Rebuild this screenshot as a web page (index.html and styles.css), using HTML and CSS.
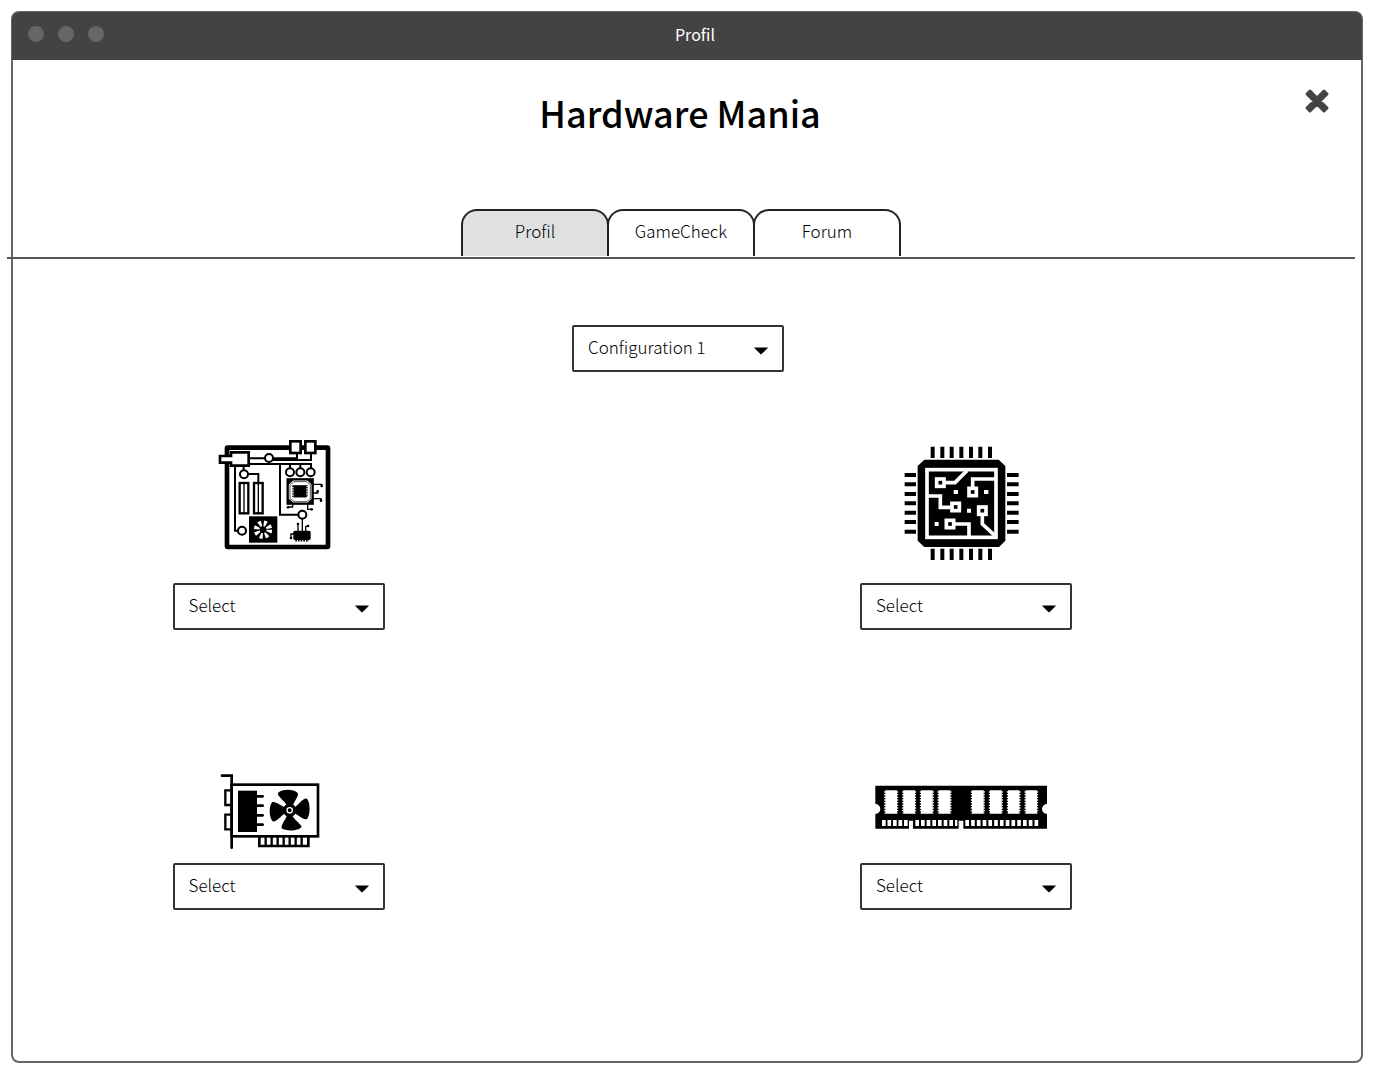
FILE: index.html
```html
<!DOCTYPE html>
<html lang="fr">
<head>
<meta charset="utf-8">
<title>Hardware Mania</title>
<meta name="viewport" content="width=device-width, initial-scale=1">
<link rel="stylesheet" href="styles.css">
</head>
<body>
<div class="window">
  <header class="titlebar">
    <span class="dots"><i class="dot"></i><i class="dot"></i><i class="dot"></i></span>
    <span class="titlebar-text">Profil</span>
  </header>

  <div class="masthead">
    <h1 class="brand">Hardware Mania</h1>
    <button class="close" type="button" aria-label="Fermer">
      <svg viewBox="0 0 26 26" width="26" height="26"><path d="M6 3 13 10 20 3 23 6 16 13 23 20 20 23 13 16 6 23 3 20 10 13 3 6Z" fill="#444" stroke="#444" stroke-width="3" stroke-linejoin="round"/></svg>
    </button>
  </div>

  <nav class="tabs">
    <a class="tab tab-active" href="#profil" aria-current="page">Profil</a>
    <a class="tab" href="#gamecheck">GameCheck</a>
    <a class="tab" href="#forum">Forum</a>
  </nav>

  <main class="content">
    <div class="select config">
      <select aria-label="Configuration"><option>Configuration 1</option></select>
      <svg class="caret" viewBox="0 0 14 8" width="14" height="8"><path d="M0 0.500H14Q13 2 7 7.500Q1 2 0 0.500Z"/></svg>
    </div>

    <div class="parts">
      <section class="part">
        <svg class="part-icon" viewBox="-126 0 636 384" role="img" aria-label="Carte mère">
          <rect x="36" y="38" width="303" height="298" rx="2" fill="#fff" stroke="#000" stroke-width="14"/>
          <g fill="none" stroke="#000" stroke-width="6">
            <path d="M100 70H246V56M150 75H288V56M100 87H288V100M225 87V100M256 87V100M195 87V239H250M86 94V110M86 117H130V145M60 92V287H70"/>
            <path d="M262 250V290M249 290V266M272 290V275L279 273M238 297H228V307" stroke-width="4"/>
            <path d="M292 148H320V153M292 174H308V168M292 191H318V197M233 205V216H220M278 205V223H290" stroke-width="4"/>
          </g>
          <g fill="#fff" stroke="#000" stroke-width="6">
            <path d="M15 63H48V52H101V92H48V83H15Z" stroke-width="8"/>
            <rect x="226" y="19" width="31" height="35" stroke-width="8"/>
            <rect x="271" y="19" width="30" height="35" stroke-width="8"/>
            <circle cx="162" cy="69" r="12"/><circle cx="87" cy="118" r="12"/>
            <circle cx="225" cy="112" r="12"/><circle cx="256" cy="112" r="12"/><circle cx="287" cy="112" r="12"/>
            <circle cx="262" cy="239" r="12"/><circle cx="81" cy="287" r="12"/>
            <rect x="74" y="144" width="26" height="91" stroke-width="7"/><rect x="117" y="144" width="26" height="91" stroke-width="7"/>
            <path d="M87 144V235M130 144V235" stroke-width="4"/>
            <rect x="218" y="133" width="75" height="73" stroke-width="7"/>
            <path d="M237 140H276L286 150V190L276 200H237L225 190V150Z" stroke-width="2"/>
          </g>
          <rect x="236" y="151" width="38" height="36"/><rect x="234" y="153" width="42" height="32" fill="none" stroke="#000" stroke-width="4" stroke-dasharray="3 2"/>
          <path d="M219 134H237L219 151ZM292 134H275L292 151ZM219 205V189L237 205ZM292 205V189L276 205Z"/>
          <circle cx="320" cy="153" r="4"/><circle cx="308" cy="169" r="4"/><circle cx="318" cy="197" r="4"/><circle cx="219" cy="217" r="4"/><circle cx="290" cy="223" r="4"/><circle cx="249" cy="267" r="4"/><circle cx="279" cy="273" r="4"/><circle cx="228" cy="309" r="4"/>
          <rect x="102" y="244" width="85" height="79"/>
          <circle cx="144" cy="284" r="19" fill="none" stroke="#fff" stroke-width="17" stroke-dasharray="8 6.920"/>
          <rect x="235" y="287" width="52" height="28" rx="5"/><path d="M241 316H282" stroke="#000" stroke-width="7" stroke-dasharray="5 3"/>
        </svg>
        <div class="select">
          <select aria-label="Carte mère"><option>Select</option></select>
          <svg class="caret" viewBox="0 0 14 8" width="14" height="8"><path d="M0 0.500H14Q13 2 7 7.500Q1 2 0 0.500Z"/></svg>
        </div>
      </section>

      <section class="part">
        <svg class="part-icon" viewBox="-117 -15 636 384" role="img" aria-label="Processeur">
          <path d="M76 59H299L319 78V302L300 321H76L56 302V78Z"/>
          <g stroke="#000" stroke-width="12">
            <path d="M101 20V54M130 20V54M158 20V54M187 20V54M216 20V54M244 20V54M273 20V54M101 326V360M130 326V360M158 326V360M187 326V360M216 326V360M244 326V360M273 326V360"/>
            <path d="M17 105H51M17 133H51M17 162H51M17 190H51M17 218H51M17 246H51M17 275H51M324 105H359M324 133H359M324 162H359M324 190H359M324 218H359M324 246H359M324 275H359"/>
          </g>
          <g fill="none" stroke="#fff" stroke-width="11">
            <rect x="84" y="89" width="207" height="203"/>
            <rect x="113" y="117" width="22" height="22"/><rect x="210" y="145" width="22" height="22"/><rect x="159" y="190" width="22" height="22"/><rect x="239" y="201" width="22" height="22"/><rect x="142" y="241" width="22" height="22"/>
            <path d="M138 128H168L204 92M221 144V117H288M88 168H124V202H156M250 226V252L288 287M167 252H210V290"/>
          </g>
          <path d="M164 150H177V162H164ZM255 150H268V162H255ZM204 206H216V218H204ZM107 246H119V258H107Z" fill="#fff"/>
        </svg>
        <div class="select">
          <select aria-label="Processeur"><option>Select</option></select>
          <svg class="caret" viewBox="0 0 14 8" width="14" height="8"><path d="M0 0.500H14Q13 2 7 7.500Q1 2 0 0.500Z"/></svg>
        </div>
      </section>

      <section class="part">
        <svg class="part-icon part-icon-short" viewBox="-126 0 636 255" role="img" aria-label="Carte graphique">
          <g fill="none" stroke="#000" stroke-width="8" stroke-linecap="round">
            <path d="M21 17H50V233"/><rect x="50" y="44" width="259" height="155"/>
            <path d="M50 61H31V105H50M50 134H31V178H50" stroke-width="7"/>
            <path d="M124 79H143M124 107H143M124 136H143M124 164H143"/>
            <path d="M133 199V228H280V199" stroke-linecap="butt"/>
            <path d="M152 202V226M170 202V226M188 202V226M206 202V226M224 202V226M242 202V226M260 202V226" stroke-width="7"/>
          </g>
          <rect x="69" y="62" width="57" height="124"/>
          <path d="M216 106C206 90 186 78 189 69C200 57 236 56 248 69C252 79 239 91 234 106ZM238 113C254 102 264 83 276 86C287 99 286 134 276 147C267 152 253 137 238 130ZM232 137C240 151 260 164 260 171C249 184 213 184 200 175C198 164 210 151 216 137ZM210 130C195 140 185 157 173 154C162 143 161 110 171 97C180 92 197 107 211 112Z"/>
          <circle cx="224" cy="121" r="20"/><circle cx="224" cy="121" r="8" fill="none" stroke="#fff" stroke-width="4"/>
        </svg>
        <div class="select">
          <select aria-label="Carte graphique"><option>Select</option></select>
          <svg class="caret" viewBox="0 0 14 8" width="14" height="8"><path d="M0 0.500H14Q13 2 7 7.500Q1 2 0 0.500Z"/></svg>
        </div>
      </section>

      <section class="part">
        <svg class="part-icon part-icon-short" viewBox="-27 -30 636 255" role="img" aria-label="Mémoire">
          <path d="M19 17H534V72A15 15 0 0 0 534 102V146H283V122H269V146H132V122H120V146H19V102A15 15 0 0 0 19 72Z"/>
          <g fill="#fff">
            <path d="M49 31H84V101H49ZM103 31H138V101H103ZM156 31H191V101H156ZM209 31H244V101H209ZM309 31H344V101H309ZM363 31H398V101H363ZM417 31H451V101H417ZM470 31H504V101H470Z"/>
          </g>
          <path d="M48 34V100M85 34V100M102 34V100M139 34V100M155 34V100M192 34V100M208 34V100M245 34V100M308 34V100M345 34V100M362 34V100M399 34V100M416 34V100M452 34V100M469 34V100M505 34V100" stroke="#fff" stroke-width="5" stroke-dasharray="4 4"/>
          <g stroke="#fff" stroke-width="18">
            <path d="M39 129H117" stroke-dasharray="11 5.500"/><path d="M139 129H265" stroke-dasharray="11 6"/><path d="M289 129H509" stroke-dasharray="11 6.300"/>
          </g>
        </svg>
        <div class="select">
          <select aria-label="Mémoire"><option>Select</option></select>
          <svg class="caret" viewBox="0 0 14 8" width="14" height="8"><path d="M0 0.500H14Q13 2 7 7.500Q1 2 0 0.500Z"/></svg>
        </div>
      </section>
    </div>
  </main>
</div>
</body>
</html>
```
FILE: styles.css
```css
* {
  box-sizing: border-box;
}

body {
  margin: 0;
  padding: 11px 12px 17px 11px;
  background: #fff;
  color: #000;
  font-family: "Noto Sans CJK SC", "Noto Sans", sans-serif;
  font-size: 17px;
  font-weight: 300;
}

.window {
  min-height: calc(100vh - 28px);
  border: 2px solid #666;
  border-radius: 8px;
}

.titlebar {
  display: grid;
  grid-template-columns: 1fr auto 1fr;
  align-items: center;
  height: 48px;
  margin: -1px -1px 0;
  padding: 0 16px 4px;
  border-radius: 7px 7px 0 0;
  background: #434343;
  color: #fff;
  font-size: 16px;
  font-weight: 400;
}

.dots {
  display: flex;
  gap: 14px;
}

.dot {
  width: 16px;
  height: 16px;
  border-radius: 50%;
  background: #666;
}

.titlebar-text {
  margin-left: 16px;
}

.masthead {
  display: grid;
  grid-template-columns: 1fr auto 1fr;
  align-items: start;
  padding: 22px 31px 0 17px;
}

.brand {
  grid-column: 2;
  margin: 0;
  font-size: 36px;
  line-height: 60px;
  font-weight: 500;
}

.close {
  justify-self: end;
  display: block;
  margin-top: 6px;
  padding: 0;
  border: 0;
  background: none;
}

.close svg {
  display: block;
}

.tabs {
  display: flex;
  justify-content: center;
  margin: 67px 6px 0 -6px;
  padding-bottom: 1px;
  border-bottom: 2px solid #555;
}

.tab {
  width: 148px;
  height: 47px;
  border: 2px solid #222;
  border-bottom: 0;
  border-radius: 16px 16px 0 0;
  color: #000;
  line-height: 40px;
  text-align: center;
  text-decoration: none;
}

.tab + .tab {
  margin-left: -2px;
}

.tab-active {
  background: #e0e0e0;
}

.content {
  padding: 66px 18px 0 0;
}

.select {
  position: relative;
  width: 212px;
}

.select select {
  display: block;
  width: 100%;
  height: 47px;
  padding: 0 40px 4px 14px;
  border: 2px solid #333;
  border-radius: 2px;
  background: #fff;
  color: #000;
  font: inherit;
  appearance: none;
}

.caret {
  position: absolute;
  top: 22px;
  right: 16px;
  pointer-events: none;
}

.config {
  margin: 0 auto;
}

.parts {
  display: grid;
  grid-template-columns: auto auto;
  justify-content: space-between;
  row-gap: 140px;
  margin: 63px 20% 0 12%;
  padding-right: 5px;
}

.part {
  display: flex;
  flex-direction: column;
  gap: 20px;
}

.part-icon {
  display: block;
  width: 212px;
  height: 128px;
}

.part-icon-short {
  height: 85px;
  margin-bottom: -12px;
}
```
